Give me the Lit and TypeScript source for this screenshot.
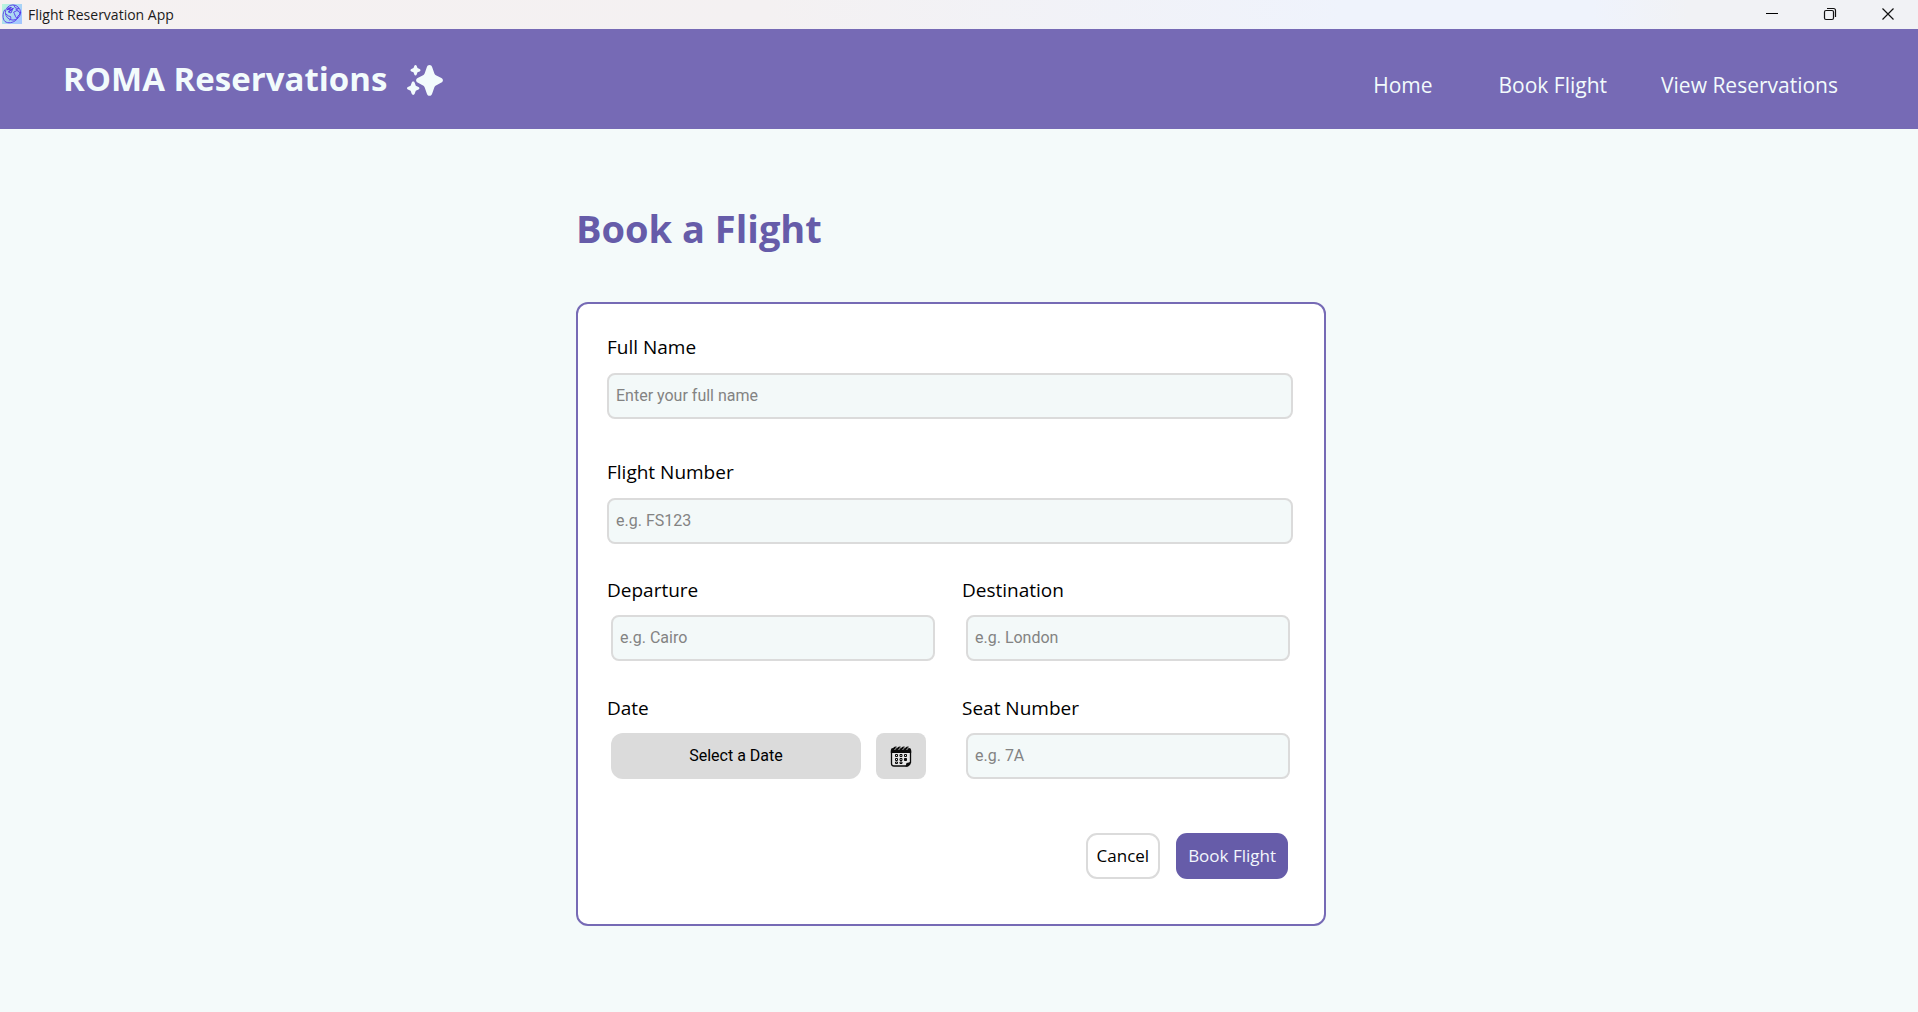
import { LitElement, html, css, svg } from "lit";
import { customElement } from "lit/decorators.js";

@customElement("title-bar")
class TitleBar extends LitElement {
  static styles = css`
    :host { display: block; }
    .bar {
      display: flex; align-items: center; height: 29px; padding: 0 1px 0 2px; gap: 6px;
      background: linear-gradient(90deg, #f5f1f1 0%, #f4f1f2 40%, #eff3fc 70%, #eff3fc 83%, #f1f2f5 88%);
      font: 14px/20px "Open Sans", "Noto Sans", sans-serif; color: #1b1b1b;
    }
    .name { flex: 1; }
    .windows { display: flex; }
    .win {
      display: flex; align-items: center; justify-content: center;
      width: 58px; height: 29px; margin: 0; padding: 0 0 1px; border: 0; background: none;
    }
    svg { display: block; }
    .logo { margin-bottom: 1px; }
  `;
  render() {
    return html`<div class="bar">
      <svg class="logo" width="20" height="20" viewBox="0 0 20 20" aria-hidden="true">
        <defs>
          <linearGradient id="g" x1="0" y1="0" x2="1" y2="0.6">
            <stop offset="0" stop-color="#b9f8dc" /><stop offset="1" stop-color="#a3c6ff" />
          </linearGradient>
        </defs>
        <rect width="20" height="20" fill="url(#g)" />
        <g fill="none" stroke="#5433ea" stroke-width="0.900" stroke-linejoin="round" stroke-linecap="round">
          <circle cx="11" cy="8.500" r="7.600" />
          <path d="M2.600 6C.4 9.500.4 15 3 17.500c3 2.200 8 1.600 11.500-1.800" />
          <path d="M6 3.500L8 6l2.500-.5L9 9 6.500 8M12 1.500l1.500 2.500 3 .5M4 10l2.500 2 2 .5.500 2-1.500 1.500M12 8l3-1.500 2.500 1.500.5 2-2 2-1 2.500-1.500-2-1-2.500zM14 5.500l2 .5" />
          <path d="M5.500 5.500L9 3.500M7 7.500l4-3" stroke-width="1.500" />
        </g>
      </svg>
      <span class="name">Flight Reservation App</span>
      <div class="windows">
        <button class="win" aria-label="Minimize"><svg width="14" height="14"><path d="M1 6.500h12" stroke="#000" /></svg></button>
        <button class="win" aria-label="Restore"><svg width="14" height="14" fill="none" stroke="#111" stroke-width="1.200"><rect x="1.500" y="3.500" width="9" height="9" rx="1.500" /><path d="M4 1.500h6.500a2 2 0 0 1 2 2V10" /></svg></button>
        <button class="win" aria-label="Close"><svg width="14" height="14"><path d="M1.500 1.500l11 11M12.500 1.500l-11 11" stroke="#111" stroke-width="1.200" /></svg></button>
      </div>
    </div>`;
  }
}

@customElement("site-header")
class SiteHeader extends LitElement {
  static styles = css`
    :host { display: block; }
    .header {
      display: flex; justify-content: space-between; box-sizing: border-box;
      height: 100px; padding: 0 80px 0 63px; background: #766ab5; color: #f2fbfc;
      font-family: "Open Sans", "Noto Sans", sans-serif;
    }
    .brand { display: flex; align-items: center; gap: 20px; }
    .name { margin: 0; font-size: 33px; line-height: 100px; font-weight: 700; }
    .nav { display: flex; align-items: center; gap: 54px; padding-top: 12px; }
    .nav a { color: inherit; text-decoration: none; font-size: 21px; line-height: 32px; }
    .nav a:first-child { margin-right: 12px; }
    svg { display: block; margin-top: 4px; }
  `;
  render() {
    return html`<header class="header">
      <div class="brand">
        <h1 class="name">ROMA Reservations</h1>
        <svg width="36" height="32" viewBox="0 0 36 32" fill="#f2fbfc" aria-hidden="true">
          <path d="M22.500 0c1.400 0 2.200.9 2.700 2.300l2 5.700c.5 1.400 1.300 2.200 2.700 2.700l4.500 2.200c2 1 2 3.700 0 4.700l-4.500 2.300c-1.400.6-2.200 1.400-2.700 2.800l-2 5.700c-.5 1.400-1.300 2.300-2.700 2.300s-2.200-.9-2.700-2.300l-2-5.700c-.5-1.400-1.300-2.200-2.700-2.800l-4.500-2.300c-2-1-2-3.700 0-4.700l4.500-2.200c1.400-.5 2.200-1.300 2.700-2.700l2-5.700C20.300.9 21.100 0 22.500 0z" />
          <path d="M8.500 0c.6 0 1 .4 1.200 1l.8 2.100 2.100.9c1.200.5 1.200 1.900 0 2.400l-2.100.9-.8 2.200c-.4 1.200-2 1.200-2.400 0l-.8-2.200-2.100-.9c-1.200-.5-1.200-1.900 0-2.400l2.100-.9L7.300 1C7.500.4 7.900 0 8.500 0z" />
          <path d="M6.200 16.500c.8 0 1.200.5 1.500 1.200l1.100 3.100 2.700 1.200c1.200.5 1.200 2 0 2.500l-2.700 1.200-1.100 3.100c-.5 1.500-2.500 1.500-3 0l-1.100-3.100-2.700-1.200c-1.200-.5-1.200-2 0-2.500l2.700-1.200 1.100-3.100c.3-.7.7-1.200 1.500-1.200z" />
        </svg>
      </div>
      <nav class="nav">
        <a href="#home">Home</a>
        <a href="#book">Book Flight</a>
        <a href="#reservations">View Reservations</a>
      </nav>
    </header>`;
  }
}

const calendarIcon = svg`
  <path d="M1.500 5.500v12a2.500 2.500 0 0 0 2.500 2.500h13l3.500-3.500v-11z" fill="#e6e6e6" stroke="#0a0a0a" stroke-width="1.300" />
  <path d="M3 2h16a2.200 2.200 0 0 1 2.200 2.200V7H.8V4.200A2.200 2.200 0 0 1 3 2z" fill="#0a0a0a" />
  <path d="M3.500 3.500C3.500 1.800 5 .8 6.500 1.200M7.500 3.500C7.500 1.800 9 .8 10.500 1.200M11.500 3.500c0-1.700 1.500-2.700 3-2.300M15.500 3.500c0-1.700 1.500-2.700 3-2.300" fill="none" stroke="#0a0a0a" stroke-width="1.200" />
  <path d="M4.500 4L6.300 2M8.500 4l1.800-2M12.500 4l1.800-2M16.500 4l1.800-2" stroke="#dbdbdb" stroke-width="0.800" />
  <path d="M15.500 20.500l1-3.500 4.500-1-.8 2.800-2 1.700z" fill="#0a0a0a" />
  <g fill="none" stroke="#0a0a0a" stroke-width="1">
    <path d="M5.500 8.500h2v2h-2zM10 8.500h2v2h-2zM14.500 8.500h2v2h-2zM5.500 12.500h2v2h-2zM10 12.500h2v2h-2zM5.500 16h2v1.500h-2zM10 16h2v1.500h-2z" />
    <path d="M14.500 12.500h2v2h-2z" fill="#0a0a0a" />
  </g>`;

@customElement("booking-form")
class BookingForm extends LitElement {
  static styles = css`
    :host { display: block; }
    .card {
      box-sizing: border-box; border: 2px solid #766ab5; border-radius: 12px; background: #fff;
      padding: 29px 31px 45px 29px; font-family: "Open Sans", "Noto Sans", sans-serif;
    }
    .wides { display: grid; gap: 39px; margin-bottom: 32px; }
    .pairs { display: grid; grid-template-columns: 1fr 1fr; gap: 33px 24px; }
    .field { display: flex; flex-direction: column; gap: 12px; min-width: 0; }
    .pairs .field { gap: 11px; }
    .label { font-size: 19px; line-height: 28px; color: #000; }
    .input {
      box-sizing: border-box; width: 100%; height: 46px; padding: 0 7px 2px; margin: 0;
      border: 2px solid #dbdbdb; border-radius: 8px; background: #f3f9f9; color: #222;
      font: 16px/20px Roboto, sans-serif; outline: none;
    }
    .input::placeholder { color: #838383; opacity: 1; }
    .inset { display: flex; gap: 15px; margin: 0 3px 0 4px; }
    button { margin: 0; cursor: pointer; height: 46px; box-sizing: border-box; }
    .date { flex: 0 1 250px; border: 0; border-radius: 12px; background: #dbdbdb; color: #000; font: 16px/20px Roboto, sans-serif; }
    .calendar { display: flex; align-items: center; justify-content: center; width: 50px; padding: 2px 0 0; border: 0; border-radius: 8px; background: #dbdbdb; }
    .actions { display: flex; justify-content: flex-end; gap: 16px; margin: 54px 5px 0 0; }
    .action { border-radius: 11px; font: 17px/26px "Open Sans", "Noto Sans", sans-serif; }
    .cancel { padding: 0 9px; border: 2px solid #dbdbdb; background: #fff; color: #000; }
    .submit { padding: 0 12px; border: 0; background: #665ca9; color: #f2f6fc; }
  `;

  input(id: string, placeholder: string) {
    return html`<input class="input" id=${id} type="text" placeholder=${placeholder} />`;
  }

  render() {
    return html`<form class="card" @submit=${(e: Event) => e.preventDefault()}>
      <div class="wides">
        <div class="field">
          <label class="label" for="name">Full Name</label>
          ${this.input("name", "Enter your full name")}
        </div>
        <div class="field">
          <label class="label" for="flight">Flight Number</label>
          ${this.input("flight", "e.g. FS123")}
        </div>
      </div>
      <div class="pairs">
        <div class="field">
          <label class="label" for="departure">Departure</label>
          <div class="inset">${this.input("departure", "e.g. Cairo")}</div>
        </div>
        <div class="field">
          <label class="label" for="destination">Destination</label>
          <div class="inset">${this.input("destination", "e.g. London")}</div>
        </div>
        <div class="field">
          <label class="label" for="date">Date</label>
          <div class="inset">
            <button class="date" id="date" type="button">Select a Date</button>
            <button class="calendar" type="button" aria-label="Open calendar">
              <svg width="22" height="22" viewBox="0 0 22 22" aria-hidden="true">${calendarIcon}</svg>
            </button>
          </div>
        </div>
        <div class="field">
          <label class="label" for="seat">Seat Number</label>
          <div class="inset">${this.input("seat", "e.g. 7A")}</div>
        </div>
      </div>
      <div class="actions">
        <button class="action cancel" type="button">Cancel</button>
        <button class="action submit" type="submit">Book Flight</button>
      </div>
    </form>`;
  }
}

@customElement("app-root")
class AppRoot extends LitElement {
  static styles = css`
    :host { display: flex; flex-direction: column; min-height: 100vh; background: #f4fafa; }
    .main { box-sizing: border-box; width: 100%; max-width: 766px; margin: 0 auto; padding: 70px 16px 40px 0; }
    .heading {
      margin: 0 0 44px; font: 700 38px/59px "Open Sans", "Noto Sans", sans-serif; color: #665ca9;
    }
  `;
  render() {
    return html`<title-bar></title-bar>
      <site-header></site-header>
      <main class="main">
        <h2 class="heading">Book a Flight</h2>
        <booking-form></booking-form>
      </main>`;
  }
}
